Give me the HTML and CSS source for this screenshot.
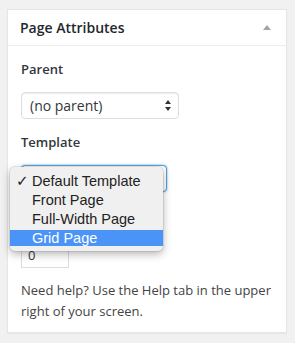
FILE: index.html
```html
<!DOCTYPE html>
<html lang="en">
<head>
    <meta charset="UTF-8">
    <title>Page Attributes</title>
    <link rel="stylesheet" href="styles.css">
</head>
<body>
    <div class="postbox">
        <div class="hndle">
            <h2>Page Attributes</h2>
            <span class="toggle"></span>
        </div>
        <div class="inside">
            <p class="label">Parent</p>
            <div class="select parent">
                <span>(no parent)</span>
                <svg class="arrows" width="6" height="11" viewBox="0 0 6 11">
                    <path d="M3 0 L6 4 L0 4 Z M0 7 L6 7 L3 11 Z" fill="#333"/>
                </svg>
            </div>

            <p class="label">Template</p>
            <div class="template-wrap">
                <div class="select template focused"></div>
                <ul class="menu">
                    <li class="checked"><span class="check">✓</span>Default Template</li>
                    <li>Front Page</li>
                    <li>Full-Width Page</li>
                    <li class="active">Grid Page</li>
                </ul>
            </div>

            <!-- the "Order" label sits under the open menu -->
            <div class="order-input">0</div>

            <p class="help">Need help? Use the Help tab in the upper right of your screen.</p>
        </div>
    </div>
</body>
</html>
```

FILE: styles.css
```css
body {
    margin: 0;
    padding: 9px 8px 9px 7px;
    background: #f1f1f1;
    font-family: "Open Sans", sans-serif;
    color: #32373c;
}
.postbox {
    width: 278px;
    background: #fff;
    border: 1px solid #e5e5e5;
    box-shadow: 0 1px 1px rgba(0,0,0,0.04);
}
.hndle {
    height: 35px;
    padding: 0 12px;
    border-bottom: 1px solid #eee;
    display: flex;
    align-items: center;
    justify-content: space-between;
}
.hndle h2 {
    margin: 0;
    font-size: 14px;
    font-weight: 600;
    color: #23282d;
}
.toggle {
    width: 0;
    height: 0;
    margin-right: 3px;
    border-left: 4px solid transparent;
    border-right: 4px solid transparent;
    border-bottom: 5px solid #a0a5aa;
}
.inside {
    padding: 0 12px 10px 13px;
}
.label {
    margin: 13px 0 0;
    font-size: 13px;
    font-weight: 600;
    line-height: 20px;
    color: #32373c;
}
.select {
    box-sizing: border-box;
    height: 27px;
    border: 1px solid #ddd;
    border-radius: 4px;
    background: #fff;
    box-shadow: inset 0 1px 2px rgba(0,0,0,0.07);
    display: flex;
    align-items: center;
    justify-content: space-between;
    padding: 0 7px 0 8px;
    font-size: 14px;
    color: #32373c;
}
.select.parent {
    width: 158px;
    margin-top: 13px;
}
.arrows {
    display: block;
}
.template-wrap {
    position: relative;
    margin-top: 13px;
}
.select.template {
    width: 146px;
    border-color: #5b9dd9;
    box-shadow: 0 0 2px rgba(30,140,190,0.8);
}
.menu {
    position: absolute;
    z-index: 2;
    left: -11px;
    top: 2px;
    width: 153px;
    margin: 0;
    padding: 5px 0 5px;
    list-style: none;
    background: #f0f0f0;
    border-radius: 5px;
    box-shadow: 0 3px 8px rgba(0,0,0,0.3), 0 0 0 1px rgba(0,0,0,0.08);
    font-family: "Liberation Sans", Arial, sans-serif;
    font-size: 14.5px;
    color: #222;
}
.menu li {
    height: 19px;
    line-height: 19px;
    padding-left: 22px;
    position: relative;
}
.menu .check {
    position: absolute;
    left: 6px;
    font-family: "DejaVu Sans", sans-serif;
    font-size: 15px;
}
.menu li.active {
    height: 16px;
    line-height: 16px;
    margin-top: 1px;
    background: #4a94f8;
    color: #fff;
}
.order-input {
    box-sizing: border-box;
    width: 48px;
    height: 28px;
    margin-top: 48px;
    border: 1px solid #ddd;
    padding: 2px 0 0 6px;
    font-size: 13px;
    line-height: 24px;
    color: #32373c;
}
.help {
    margin: 12px 0 0;
    font-size: 13px;
    line-height: 21px;
    color: #444;
}
```
